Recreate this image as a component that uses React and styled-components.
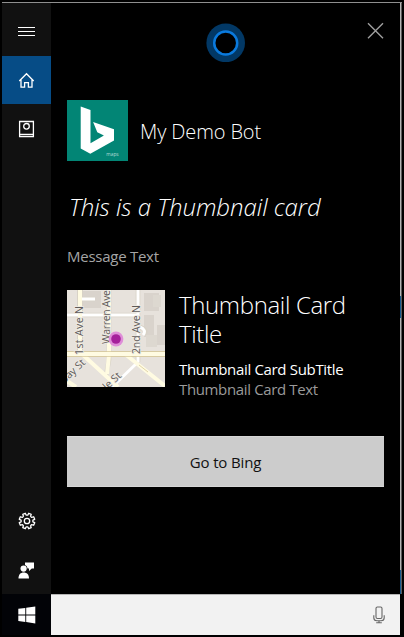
import React from 'react';
import styled, { createGlobalStyle } from 'styled-components';

const GlobalStyle = createGlobalStyle`
  * { box-sizing: border-box; }
  body { margin: 0; background: #000; font-family: 'Open Sans', 'Noto Sans', sans-serif; overflow: hidden; }
`;

const Desktop = styled.div`
  width: 404px;
  height: 637px;
  padding: 2px;
  background: #000;
  display: flex;
`;

const Window = styled.div`
  flex: 1;
  display: flex;
  flex-direction: column;
  border-top: 1px solid #8f8f8f;
`;

const Body = styled.div`
  height: 591px;
  display: flex;
`;

const Sidebar = styled.nav`
  width: 49px;
  padding-top: 1px;
  background: #111;
  display: flex;
  flex-direction: column;
`;

const NavButton = styled.button`
  width: 49px;
  height: ${(p) => p.$height || 49}px;
  padding: ${(p) => p.$drop || 0}px 0 0;
  border: 0;
  color: #fff;
  background: ${(p) => (p.$active ? '#064c86' : 'transparent')};
  display: grid;
  place-items: center;
  svg { display: block; }
`;

const Spacer = styled.div`
  flex: 1;
`;

const Panel = styled.main`
  flex: 1;
  padding: 0 16px;
  color: #fff;
  background: #000;
  display: flex;
  flex-direction: column;
`;

const TopBar = styled.header`
  height: 97px;
  padding-top: 19px;
  display: grid;
  grid-template-columns: 1fr 40px 1fr;
  align-items: start;
`;

const CloseButton = styled.button`
  justify-self: end;
  padding: 0;
  border: 0;
  background: none;
  svg { display: block; }
`;

const BotHeader = styled.div`
  height: 61px;
  display: flex;
  align-items: center;
  gap: 12px;
  svg { flex: none; }
`;

const BotName = styled.div`
  padding-top: 2px;
`;

const Text = styled.div`
  font-size: ${(p) => p.$size}px;
  line-height: ${(p) => p.$line}px;
  font-weight: ${(p) => p.$weight || 400};
  letter-spacing: ${(p) => p.$track || 0}px;
  color: ${(p) => p.$color || '#fff'};
  font-style: ${(p) => (p.$italic ? 'italic' : 'normal')};
  white-space: nowrap;
`;

const Speech = styled.div`
  padding: 30px 0 0 2px;
`;

const Message = styled.div`
  padding-top: 23px;
`;

const Card = styled.section`
  margin-top: 24px;
  height: 97px;
  display: flex;
  gap: 14px;
  svg { flex: none; }
`;

const CardText = styled.div`
  display: flex;
  flex-direction: column;
`;

const Details = styled.div`
  padding-top: 11px;
`;

const ActionButton = styled.button`
  margin-top: 49px;
  width: 317px;
  height: 51px;
  padding: 1px 0 0;
  border: 1px solid #d6d6d6;
  border-width: 1px 0;
  background: #ccc;
  display: grid;
  place-items: center;
  font-family: inherit;
`;

const WindowEdge = styled.div`
  width: 2px;
  border-right: 1px solid #5b5b5b;
  background: linear-gradient(#b4b4b4 0 293px, #17598d 293px 315px, #b4b4b4 315px 567px, #17598d 567px);
`;

const Taskbar = styled.footer`
  flex: 1;
  display: flex;
`;

const StartCell = styled.div`
  width: 49px;
  background: #020307;
  display: grid;
  place-items: center;
`;

const SearchBox = styled.div`
  width: 349px;
  padding-right: 15px;
  border-top: 1px solid #b5b5b5;
  background: #f2f2f2;
  display: flex;
  justify-content: flex-end;
  align-items: center;
`;

const MenuIcon = () => (
  <svg width="17" height="11" viewBox="0 0 17 11" stroke="#fff" shapeRendering="crispEdges">
    <path d="M0 1.5h17M0 5.5h17M0 9.5h17" />
  </svg>
);

const HomeIcon = () => (
  <svg width="17" height="17" viewBox="0 0 17 17" fill="none" stroke="#fff" strokeWidth="1.3">
    <path d="M1.3 9 8.5 1.7 15.7 9M3 7.6v7.6h3.6v-4.6h3.8v4.6H14V7.6" />
  </svg>
);

const NotebookIcon = () => (
  <svg width="17" height="18" viewBox="0 0 17 18" fill="none" stroke="#fff" strokeWidth="1.3">
    <path d="M1.6 1.5h13.8v15.2H1.6zM2 14.5h13" />
    <circle cx="8.5" cy="6.3" r="2.8" />
  </svg>
);

const GEAR = Array.from({ length: 8 }, (_, i) =>
  [[-22.5, 5.8], [-14, 6], [-10, 7.9], [10, 7.9], [14, 6]].map(([a, r]) => {
    const t = ((i * 45 + 22.5 + a) * Math.PI) / 180;
    return `${(9 + r * Math.sin(t)).toFixed(2)},${(9 - r * Math.cos(t)).toFixed(2)}`;
  }).join(' ')
).join(' ');

const GearIcon = () => (
  <svg width="18" height="18" viewBox="0 0 18 18" fill="none" stroke="#fff" strokeWidth="1.3" strokeLinejoin="round">
    <polygon points={GEAR} />
    <circle cx="9" cy="9" r="2.7" />
  </svg>
);

const FeedbackIcon = () => (
  <svg width="17" height="17" viewBox="0 0 17 17" fill="#fff">
    <path d="M7 .5h9v6h-2.2L11 9V6.4H9.6A4 4 0 0 0 7 3z" />
    <circle cx="5.6" cy="6.6" r="3.1" />
    <path d="M.5 16.6c0-4 2-6 5.2-6s5.3 2 5.3 6z" />
  </svg>
);

const WindowsIcon = () => (
  <svg width="18" height="18" viewBox="0 0 18 18" fill="#fff">
    <path d="M.3 2.8 7.3 1.9v6.6h-7zM8.2 1.7 17.3.5v8H8.2zM.3 9.4h7v6.5L.3 15zM8.2 9.4h9.1v8L8.2 16.1z" />
  </svg>
);

const CortanaIcon = () => (
  <svg width="40" height="40" viewBox="0 0 40 40">
    <circle cx="19.7" cy="20.9" r="19.3" fill="#023865" />
    <circle cx="19.7" cy="20.9" r="11.5" fill="#000" stroke="#0a7add" strokeWidth="2.5" />
  </svg>
);

const CloseIcon = () => (
  <svg width="17" height="17" viewBox="0 0 17 17" stroke="#a0a0a0" strokeWidth="1.35">
    <path d="m1 1.3 15 15M16 1.3l-15 15" />
  </svg>
);

const MicIcon = () => (
  <svg width="12" height="18" viewBox="0 0 12 18" fill="none" stroke="#666" strokeWidth="1.1">
    <rect x="3" y="1" width="6" height="11.5" rx="1.4" />
    <path d="M.8 9.2v2.5c0 2 1 3 3 3h4.4c2 0 3-1 3-3V9.2M6 14.7v2M3.2 16.8h5.6" />
  </svg>
);

const BingLogo = () => (
  <svg width="61" height="61" viewBox="0 0 61 61">
    <path fill="#028575" d="M0 0h61v61H0z" />
    <path fill="#fff" d="m13.7 6.6 9.8 3.3v33.4l13.4-7.8-6.6-3.2-4.2-10.4L47 29.3v11.2L23.3 53.7l-9.6-5.3z" />
    <text x="39.3" y="56.4" fill="#b5dcd5" fontFamily="Open Sans, sans-serif" fontSize="4.8">maps</text>
  </svg>
);

const MapThumbnail = () => (
  <svg width="98" height="97" viewBox="0 0 98 97">
    <path fill="#e7e2dc" d="M0 0h98v97H0z" />
    <path fill="#d9d3cc" d="M16 1h18v17H16zM77 3h15v18H77zM77 25h10v22H77zM90 35h8v20h-8z" />
    <path fill="#ddd8d0" d="M86 5h8v12h-8zM79 45h11v12H79z" />
    <g fill="none" stroke="#d8d2c6">
      <path strokeWidth="4.6" d="M0 25h71M42 0v70l-3 16M71 0v72M73 37q8 3 4 7M15 9h13" />
      <path strokeWidth="6" d="M13 0v60M0 64h98" />
    </g>
    <path fill="none" stroke="#fff" strokeWidth="3" d="M0 25h71M71 0v72M73 37q7 3 3 8M15 9h13M71 72 45 97" />
    <path fill="none" stroke="#fffbe2" strokeWidth="4" d="M13 0v63M42 0v65l-2 19M0 64h98M15 64l36 33M58 64l40 32M0 91l9 6" />
    <path stroke="#d8c99b" strokeWidth=".8" d="M0 61.5h98M0 66.5h98M72 75l9 7" fill="none" />
    <g fill="#5e5b59" stroke="#eeeae4" strokeWidth="1.6" paintOrder="stroke" fontFamily="Open Sans, sans-serif" fontSize="10.5" fontWeight="500">
      <text transform="translate(15.8 65) rotate(-90)" textLength="49">1st Ave N</text>
      <text transform="translate(43.3 54) rotate(-90)" textLength="54">Warren Ave</text>
      <text transform="translate(73.3 64) rotate(-90)" textLength="49">2nd Ave N</text>
      <text transform="translate(-3 94) rotate(-43)">Bay St</text>
      <text transform="translate(35 105) rotate(-43)">ple St</text>
    </g>
    <circle cx="49" cy="49" r="7.4" fill="#df8ed8" />
    <circle cx="49" cy="49" r="4.8" fill="#a5209b" />
  </svg>
);

export default function App() {
  return (
    <>
      <GlobalStyle />
      <Desktop>
        <Window>
          <Body>
            <Sidebar>
              <NavButton $height={52} $drop={2}><MenuIcon /></NavButton>
              <NavButton $active $height={48}><HomeIcon /></NavButton>
              <NavButton><NotebookIcon /></NavButton>
              <Spacer />
              <NavButton><GearIcon /></NavButton>
              <NavButton $drop={1}><FeedbackIcon /></NavButton>
            </Sidebar>
            <Panel>
              <TopBar>
                <span />
                <CortanaIcon />
                <CloseButton aria-label="Close"><CloseIcon /></CloseButton>
              </TopBar>
              <BotHeader>
                <BingLogo />
                <BotName>
                  <Text $size={20} $line={28} $weight={300} $track={-0.12}>My Demo Bot</Text>
                </BotName>
              </BotHeader>
              <Speech>
                <Text $size={24} $line={32} $weight={300} $track={-0.04} $italic>This is a Thumbnail card</Text>
              </Speech>
              <Message>
                <Text $size={15} $line={20} $track={-0.26} $color="#a5a5a5">Message Text</Text>
              </Message>
              <Card>
                <MapThumbnail />
                <CardText>
                  <Text $size={24} $line={29} $weight={300} $track={-0.35}>Thumbnail Card<br />Title</Text>
                  <Details>
                    <Text $size={15} $line={20} $track={-0.33}>Thumbnail Card SubTitle</Text>
                    <Text $size={15} $line={20} $track={-0.36} $color="#9a9a9a">Thumbnail Card Text</Text>
                  </Details>
                </CardText>
              </Card>
              <ActionButton>
                <Text $size={15} $line={20} $track={-0.15} $color="#111">Go to Bing</Text>
              </ActionButton>
            </Panel>
            <WindowEdge />
          </Body>
          <Taskbar>
            <StartCell><WindowsIcon /></StartCell>
            <SearchBox><MicIcon /></SearchBox>
          </Taskbar>
        </Window>
      </Desktop>
    </>
  );
}
